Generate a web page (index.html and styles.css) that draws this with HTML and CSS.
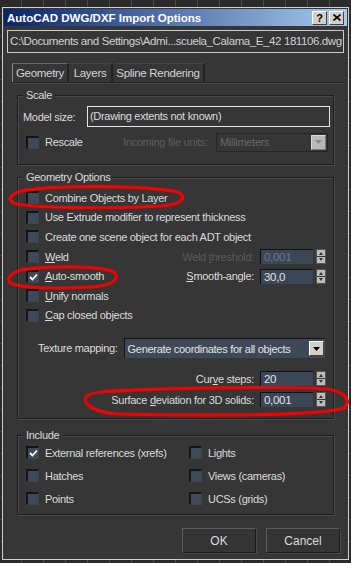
FILE: index.html
```html
<!DOCTYPE html>
<html lang="en">
<head>
  <meta charset="UTF-8" />
  <title>AutoCAD DWG/DXF Import Options</title>
  <link rel="stylesheet" href="styles.css">
</head>
<body>

  <div class="window">
    <div class="titlebar">
      <span class="title">AutoCAD DWG/DXF Import Options</span>
      <span class="tbtn help">?</span>
      <span class="tbtn close">
        <svg width="8" height="7" viewBox="0 0 8 7"><path d="M0.5 0.5 L7.5 6.5 M7.5 0.5 L0.5 6.5" stroke="#000" stroke-width="1.6"/></svg>
      </span>
    </div>

    <div class="path">C:\Documents and Settings\Admi...scuela_Calama_E_42 181106.dwg</div>

    <div class="tabs">
      <span class="tab active">Geometry</span>
      <span class="tab tab-layers">Layers</span>
      <span class="tab tab-spline">Spline Rendering</span>
    </div>

    <div class="panel">
      <!-- Scale -->
      <div class="group group-scale">
        <span class="group-label">Scale</span>
        <div class="row model-row">
          <span class="model-label">Model size:</span>
          <div class="textbox">(Drawing extents not known)</div>
        </div>
        <div class="row rescale-row">
          <span class="check"></span>
          <span class="check-text">Rescale</span>
          <span class="dim units-label">Incoming file units:</span>
          <div class="combo combo-off">
            <span>Millimeters</span>
            <span class="drop"><svg width="7" height="4" viewBox="0 0 7 4"><path d="M0 0 H7 L3.5 4 Z" fill="#8a8a8a"/></svg></span>
          </div>
        </div>
      </div>

      <!-- Geometry Options -->
      <div class="group group-geom">
        <span class="group-label">Geometry Options</span>
        <div class="checks">
          <div class="row check-row">
            <span class="check"></span><span class="check-text">Combine Objects by Layer</span>
          </div>
          <div class="row check-row">
            <span class="check"></span><span class="check-text">Use Extrude modifier to represent thickness</span>
          </div>
          <div class="row check-row">
            <span class="check"></span><span class="check-text">Create one scene object for each ADT object</span>
          </div>
          <div class="row check-row">
            <span class="check"></span><span class="check-text"><u>W</u>eld</span>
            <span class="dim spin-label">Weld <u>t</u>hreshold:</span>
            <span class="spin-field spin-off">0,001</span>
            <span class="spinner"></span>
          </div>
          <div class="row check-row">
            <span class="check on"><svg width="9" height="8" viewBox="0 0 9 8"><path d="M1 4 L3.5 6.5 L8 1.5" stroke="#fff" stroke-width="1.8" fill="none"/></svg></span>
            <span class="check-text"><u>A</u>uto-smooth</span>
            <span class="spin-label"><u>S</u>mooth-angle:</span>
            <span class="spin-field">30,0</span>
            <span class="spinner"></span>
          </div>
          <div class="row check-row">
            <span class="check"></span><span class="check-text"><u>U</u>nify normals</span>
          </div>
          <div class="row check-row">
            <span class="check"></span><span class="check-text"><u>C</u>ap closed objects</span>
          </div>
        </div>

        <div class="row texture-row">
          <span class="texture-label">Texture mapping:</span>
          <div class="combo combo-on">
            <span>Generate coordinates for all objects</span>
            <span class="drop"><svg width="7" height="4" viewBox="0 0 7 4"><path d="M0 0 H7 L3.5 4 Z" fill="#000"/></svg></span>
          </div>
        </div>

        <div class="row spin-row">
          <span class="spin-label">Cur<u>v</u>e steps:</span>
          <span class="spin-field">20</span>
          <span class="spinner"></span>
        </div>
        <div class="row spin-row">
          <span class="spin-label">Surface <u>d</u>eviation for 3D solids:</span>
          <span class="spin-field">0,001</span>
          <span class="spinner"></span>
        </div>
      </div>

      <!-- Include -->
      <div class="group group-include">
        <span class="group-label">Include</span>
        <div class="include-grid">
          <div class="row inc-row">
            <span class="check on"><svg width="9" height="8" viewBox="0 0 9 8"><path d="M1 4 L3.5 6.5 L8 1.5" stroke="#fff" stroke-width="1.8" fill="none"/></svg></span>
            <span class="check-text">External references (xrefs)</span>
          </div>
          <div class="row inc-row">
            <span class="check"></span><span class="check-text">Lights</span>
          </div>
          <div class="row inc-row">
            <span class="check"></span><span class="check-text">Hatches</span>
          </div>
          <div class="row inc-row">
            <span class="check"></span><span class="check-text">Views (cameras)</span>
          </div>
          <div class="row inc-row">
            <span class="check"></span><span class="check-text">Points</span>
          </div>
          <div class="row inc-row">
            <span class="check"></span><span class="check-text">UCSs (grids)</span>
          </div>
        </div>
      </div>
    </div>

    <div class="buttons">
      <span class="btn">OK</span>
      <span class="btn">Cancel</span>
    </div>
  </div>

  <!-- red marker rings drawn over the dialog -->
  <svg class="marks" width="351" height="563" viewBox="0 0 351 563">
    <path d="M20 191 C60 184 150 186 178 192 C188 197 182 205 160 206 C110 209 40 208 16 204 C6 201 9 193 26 190" />
    <path d="M22 270 C50 265 100 266 114 272 C121 279 112 286 90 287 C60 289 25 288 12 284 C5 280 9 273 24 269" />
    <path d="M100 392 C160 388 280 386 328 389 C345 392 352 400 344 408 C320 416 200 416 120 414 C95 413 82 404 86 397 C90 392 110 390 140 390" />
  </svg>

</body>
</html>
```

FILE: styles.css
```css
* {
  margin: 0;
  padding: 0;
  box-sizing: border-box;
}

body {
  position: relative;
  width: 351px;
  height: 563px;
  overflow: hidden;
  font-family: "Liberation Sans", Arial, sans-serif;
  font-size: 11px;
  letter-spacing: -0.3px;
  white-space: nowrap;
  color: #dcdcdc;
  background-color: #2b2b2b;
  background-image:
    repeating-linear-gradient(90deg, transparent 0 21px, #4d4d4d 21px 22px),
    repeating-linear-gradient(0deg, transparent 0 21px, #444 21px 22px);
}

u {
  text-decoration: underline;
  text-underline-offset: 1px;
}

.window {
  width: 347px;
  height: 553px;
  margin: 7px 0 0 2px;
  border: 1px solid #cfcfcf;
  padding: 1px;
  background: #363636;
  display: flex;
  flex-direction: column;
}

/* title bar */
.titlebar {
  height: 17px;
  display: flex;
  align-items: center;
  gap: 2px;
  padding: 0 3px;
  background: linear-gradient(to right, #0a246a, #a6caf0);
}

.title {
  flex: 1;
  color: #fff;
  font-weight: bold;
  font-size: 11.5px;
  letter-spacing: 0;
}

.tbtn {
  width: 15px;
  height: 14px;
  display: flex;
  align-items: center;
  justify-content: center;
  background: #d4d0c8;
  border: 1px solid;
  border-color: #fff #404040 #404040 #fff;
  color: #000;
  font-weight: bold;
  font-size: 11px;
}

/* file path */
.path {
  width: 337px;
  height: 23px;
  margin: 4px 0 0 3px;
  padding: 0 0 0 2px;
  border: 1px solid #cdcdcd;
  font-size: 11.5px;
  letter-spacing: -0.4px;
  line-height: 21px;
  overflow: hidden;
  color: #d2d2d2;
}

/* tabs */
.tabs {
  width: 332px;
  height: 20px;
  margin: 10px 0 0 8px;
  display: flex;
  border-bottom: 1px solid #262626;
  box-shadow: 0 1px 0 #454545;
}

.tab {
  height: 19px;
  display: flex;
  align-items: center;
  justify-content: center;
  border-right: 2px solid #222;
  border-top: 1px solid #444;
  font-size: 11.5px;
  color: #d4d4d4;
}

.tab.active {
  width: 57px;
  border-left: 1px solid #8a8a8a;
  border-top-color: #666;
}

.tab-layers {
  width: 44px;
}

.tab-spline {
  width: 92px;
}

/* panel with group boxes */
.panel {
  width: 317px;
  margin-left: 13px;
  display: flex;
  flex-direction: column;
}

.group {
  border: 1px solid #1f1f1f;
  box-shadow: inset 1px 1px 0 #4a4a4a, 1px 1px 0 #4a4a4a;
  display: flex;
  flex-direction: column;
}

.group-label {
  align-self: flex-start;
  margin: -7px 0 0 5px;
  padding: 0 3px;
  line-height: 12px;
  background: #363636;
}

.group-scale {
  height: 70px;
  margin-top: 12px;
}

.group-geom {
  height: 242px;
  margin-top: 12px;
}

.group-include {
  height: 80px;
  margin-top: 16px;
}

.row {
  display: flex;
  align-items: center;
}

.dim {
  color: #5e5e5e;
}

/* scale rows */
.model-row {
  height: 21px;
  margin-top: 5px;
  padding: 0 3px 0 5px;
}

.model-label {
  width: 64px;
}

.textbox {
  flex: 1;
  height: 21px;
  padding-left: 2px;
  border: 1px solid #e6e6e6;
  line-height: 19px;
}

.rescale-row {
  height: 20px;
  margin-top: 5px;
  padding: 0 5px 0 8px;
}

.units-label {
  margin: 0 8px 0 auto;
}

/* check boxes */
.check {
  width: 13px;
  height: 13px;
  flex: none;
  display: flex;
  align-items: center;
  justify-content: center;
  background: #3d4a5a;
  border-top: 2px solid #151515;
  border-left: 2px solid #151515;
  border-right: 1px solid #444;
  border-bottom: 1px solid #444;
}

.check-text {
  margin-left: 6px;
}

.checks {
  margin-top: 5px;
  padding-left: 8px;
}

.check-row {
  height: 19.6px;
  padding-right: 7px;
}

/* spinner fields */
.spin-label {
  margin: 0 6px 0 auto;
}

.spin-label.dim {
  color: #5a5a5a;
}

.spin-field {
  width: 53px;
  height: 15px;
  padding-left: 3px;
  background: #3b4757;
  border-top: 1px solid #111;
  border-left: 1px solid #111;
  font-size: 11.5px;
  line-height: 14px;
  color: #e2e2e2;
}

.spin-off {
  color: #6c7784;
}

.spinner {
  width: 10px;
  height: 15px;
  margin-left: 3px;
  background:
    linear-gradient(#333, #333) center / 100% 1px no-repeat,
    #bdbdbd;
  border: 1px solid #555;
  position: relative;
}

.spinner::before,
.spinner::after {
  content: "";
  position: absolute;
  left: 2px;
  border-left: 2px solid transparent;
  border-right: 2px solid transparent;
}

.spinner::before {
  top: 2px;
  border-bottom: 3px solid #333;
}

.spinner::after {
  bottom: 2px;
  border-top: 3px solid #333;
}

/* combo boxes */
.combo {
  display: flex;
  align-items: center;
  justify-content: space-between;
  padding: 0 1px 0 3px;
}

.combo-off {
  width: 112px;
  height: 19px;
  border: 1px solid #262626;
  color: #666;
}

.combo-on {
  width: 201px;
  height: 20px;
  background: #3e4958;
  border-top: 1px solid #151515;
  border-left: 1px solid #151515;
  color: #e4e4e4;
}

.drop {
  width: 15px;
  height: 15px;
  display: flex;
  align-items: center;
  justify-content: center;
  background: #d4d0c8;
  border: 1px solid;
  border-color: #fff #404040 #404040 #fff;
}

.combo-off .drop {
  background: #b9b9b9;
  border-color: #d8d8d8 #7a7a7a #7a7a7a #d8d8d8;
}

.texture-row {
  height: 20px;
  margin-top: 13px;
  padding: 0 8px 0 20px;
}

.texture-label {
  margin-right: 6px;
}

.spin-row {
  height: 21px;
  padding-right: 7px;
}

.texture-row + .spin-row {
  margin-top: 10px;
}

/* include */
.include-grid {
  display: grid;
  grid-template-columns: 163px 1fr;
  padding-left: 8px;
}

.inc-row {
  height: 23px;
}

/* buttons */
.buttons {
  display: flex;
  justify-content: flex-end;
  gap: 10px;
  margin-top: 13px;
  padding-right: 7px;
}

.btn {
  width: 74px;
  height: 25px;
  display: flex;
  align-items: center;
  justify-content: center;
  background: #343434;
  border: 1px solid;
  border-color: #5c5c5c #1b1b1b #1b1b1b #5c5c5c;
  box-shadow: 1px 1px 0 #4a4a4a;
  font-size: 12px;
  letter-spacing: 0;
  color: #dcdcdc;
}

/* red marker rings */
.marks {
  position: absolute;
  top: 0;
  left: 0;
  pointer-events: none;
}

.marks path {
  fill: none;
  stroke: #f20000;
  stroke-width: 3.2;
  stroke-linecap: round;
  stroke-linejoin: round;
}
```
